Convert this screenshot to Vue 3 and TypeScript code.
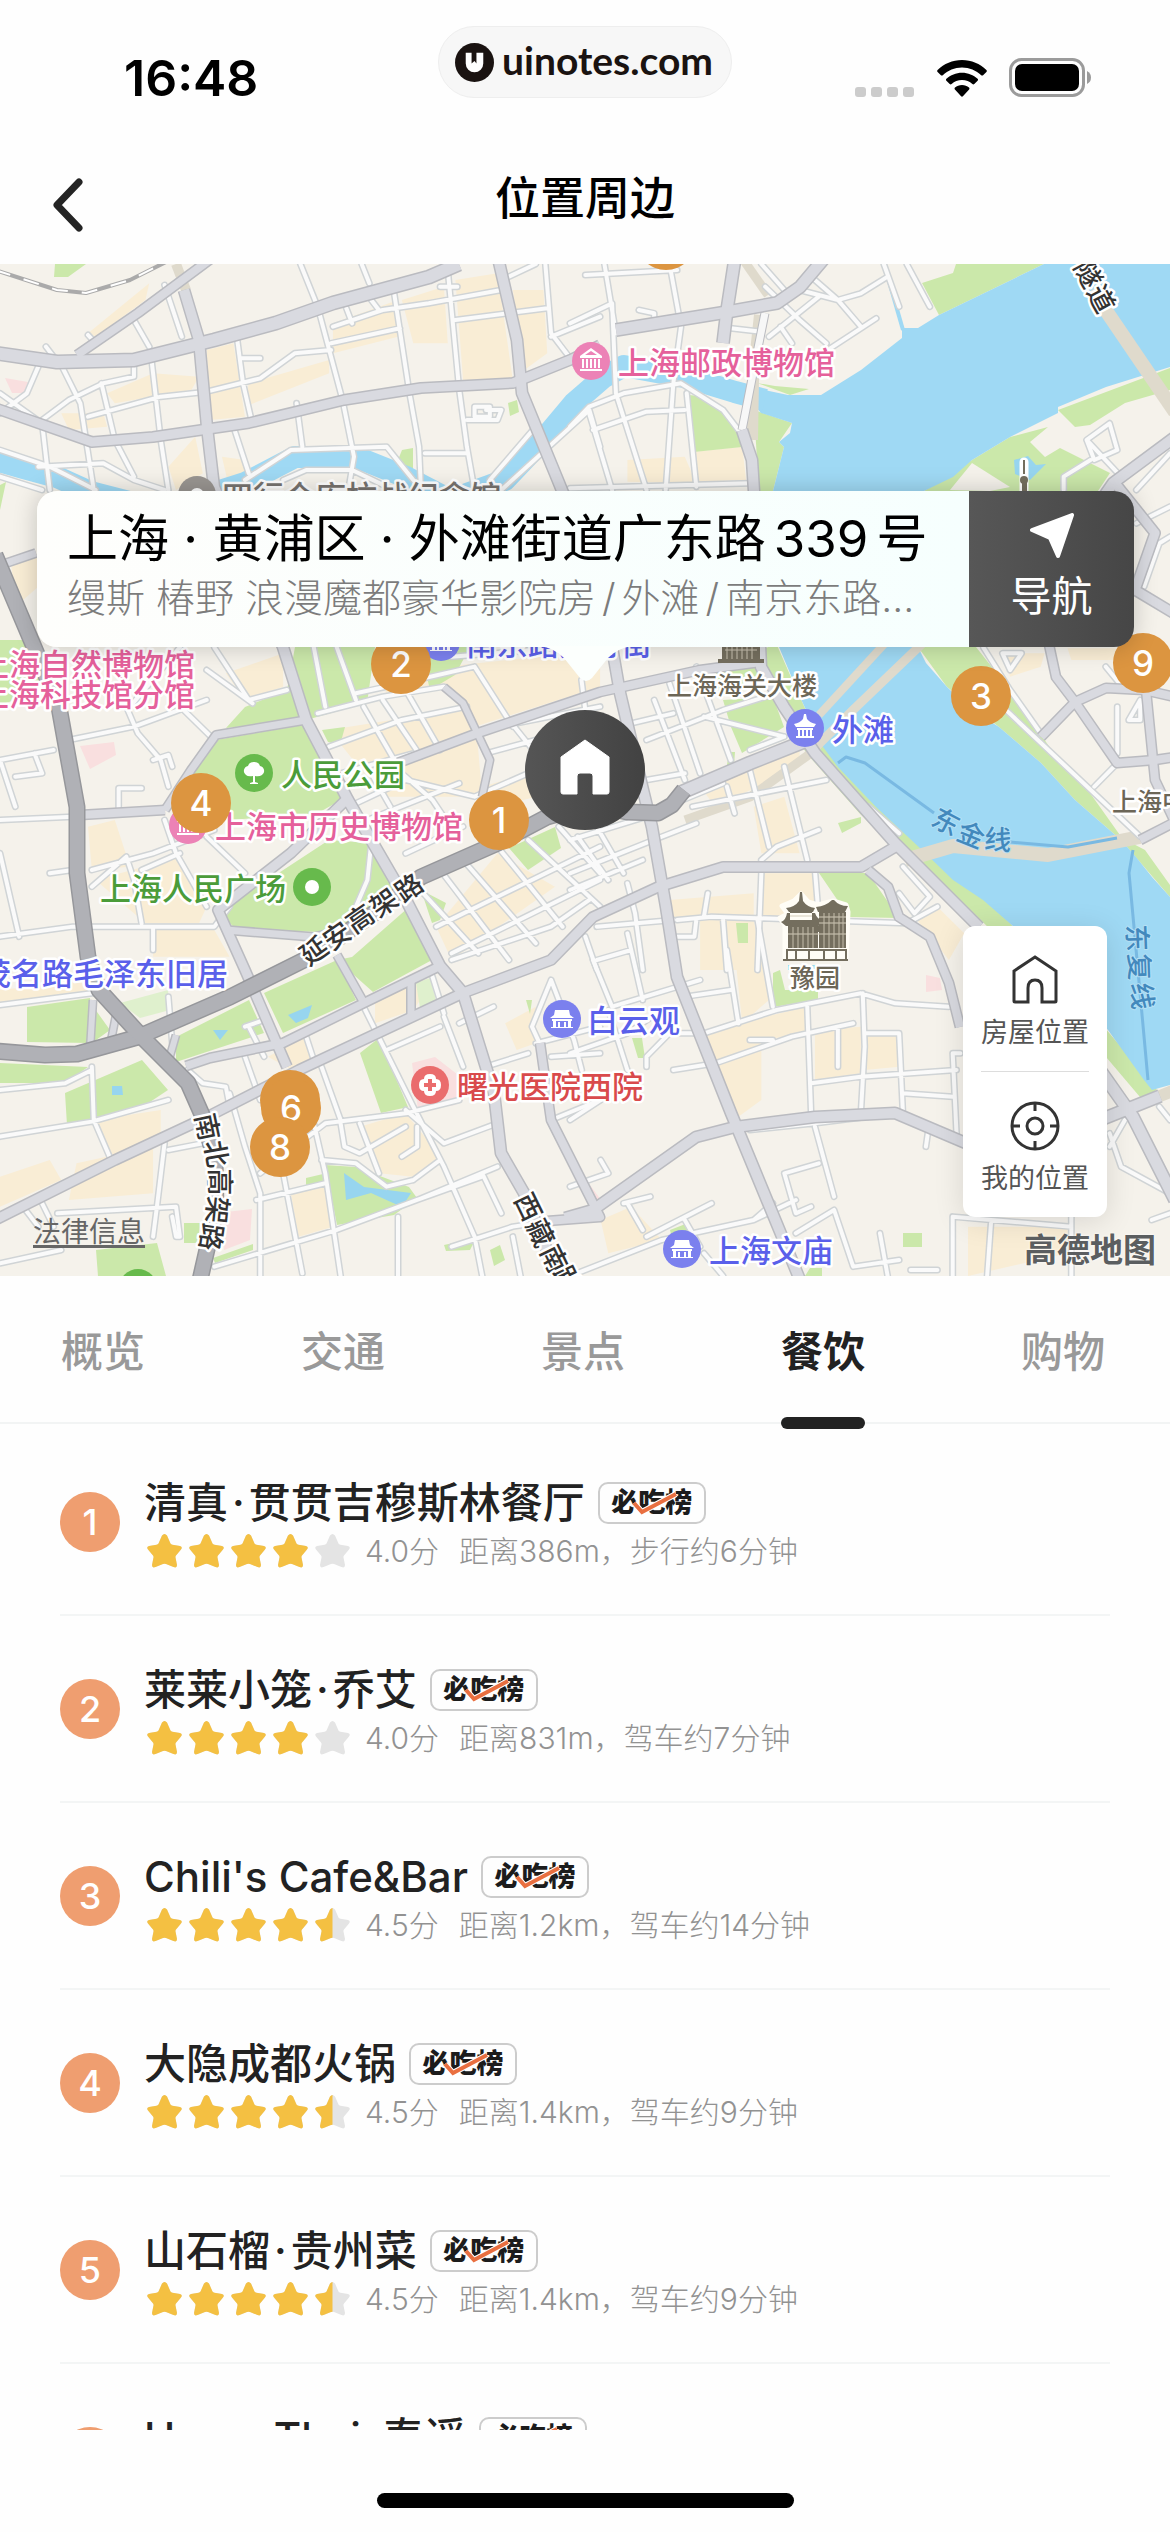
<script setup lang="ts">
import { ref } from 'vue'

interface Tile { place: string; d: string }
interface Road { w: number; d: string }
interface Poi { kind: string; x: number; y: number; tx: number; text: string; anchor?: 'start' | 'end' | 'middle'; icon: boolean }
interface Glyph { ch: string; x: number; y: number; r: number; tone: 'road' | 'ferry' }
interface Pin { n: string; x: number; y: number }
interface Place { name: string[]; score: string; stars: number; distance: string }

const north = 'translate(0 260) scale(.3827 .3333)'
const northEast = 'translate(570 260) scale(.3827 .3333)'
const middle = 'translate(0 640) scale(.3827 .3333)'
const middleEast = 'translate(570 640) scale(.3827 .3333)'
const south = 'translate(0 960) scale(.3827 .3333)'
const southEast = 'translate(570 900) scale(.3827 .3333)'

const blocks: Tile[] = [
  { place: north, d: 'M540 270L610 250 640 470 550 480Z M1050 120L1160 80 1170 250 1080 250Z M1190 60L1300 40 1340 360 1210 360Z M230 220L390 70 380 120 250 230Z M280 400L400 340 520 350 500 390 300 430Z M870 190L1040 120 1040 230 870 280Z M650 370L860 300 860 340 640 440Z M1340 90L1420 90 1430 280 1370 330Z M30 920L100 880 100 980 40 1040Z M440 620L510 530 530 640 460 690Z M580 590L640 600 660 650 600 690Z M160 460L270 460 280 500 180 510Z' },
  { place: northEast, d: 'M150 600L300 590 330 670 150 665Z M325 575L450 560 460 660 330 665Z M1420 1165L1300 1165 1310 1200 1568 1200Z' },
  { place: middle, d: 'M590 100L740 40 740 140 640 180Z M860 270L1240 200 1260 470 1000 470Z M1000 100L1568 30 1568 140 1240 260 1160 140 1010 170Z M1140 860L1300 640 1450 740 1180 960Z M230 560L300 540 340 680 240 690Z M400 870L560 870 600 950 400 950Z M250 720L470 650 540 800 520 850 380 850Z M1260 440L1380 400 1400 470 1300 500Z' },
  { place: middleEast, d: 'M480 500L560 470 600 640 500 640Z M260 780L480 760 480 990 340 990 340 840 270 830Z M500 700L640 700 640 830 500 830Z M340 440L600 310 600 380 380 500Z M900 830L960 800 1030 880 990 960Z M1130 40L1240 40 1230 80 1150 110Z' },
  { place: south, d: 'M250 480L420 450 420 540 290 590Z M700 290L800 230 830 320 780 340Z M980 100L1140 50 1080 150 980 190Z M940 500L1060 460 1160 600 1080 650 990 640Z M200 610L400 560 400 700 180 720Z M760 700L850 680 870 800 780 830Z M0 90L230 60 230 100 0 130Z M0 650L130 600 160 660 0 740Z M1320 190L1400 140 1400 250 1350 270Z' },
  { place: southEast, d: 'M330 400L620 320 620 400 500 420 500 600 440 650Z M640 390L760 380 760 520 640 540Z M770 400L860 400 860 500 770 510Z M480 60L520 300 450 370 430 150Z M1040 980L1300 980 1300 1060 1040 1128Z M80 960L160 920 240 1020 100 1060Z' },
]

const parks = 'M956 264L953 273 922 283 939 315 1044 264ZM1058 410L1170 368V390L1125 403 1090 425 1075 427ZM924 491L972 460 1010 437 1048 427 1030 442 1045 457 1060 448 1110 473 1098 491ZM754 410L792 423 779 442 784 447 773 491H757V460ZM757 383L775 386 809 389 790 395ZM689 395L708 397 738 427 742 447 694 452ZM402 450L413 448 413 475 398 460ZM508 403L517 400 519 412 510 416ZM55 264H86L68 277 54 277ZM0 485L6 482 0 510ZM295 647H375L367 703 306 720 226 728 245 707 287 690ZM420 647H470L455 675 430 690ZM0 640L30 640 45 690 0 705ZM216 740L302 725 329 767 341 800 318 813 230 820 188 773ZM322 730L345 727 340 745 328 742ZM329 840L371 843 394 887 364 930 325 932 237 930 218 912 268 880ZM352 957L409 907 432 960 373 992 337 960ZM264 993L337 960 356 1000 283 1033ZM176 1037L249 1000 264 1033 176 1062ZM27 1007L90 998V1043L27 1042ZM92 1005L110 1030 92 1043ZM0 1063L88 1067 65 1083H0ZM65 1093L142 1060 168 1090 138 1110 67 1125ZM360 1053L379 1038 408 1107 381 1113ZM325 1165L356 1167 409 1187 417 1198 394 1215 337 1225ZM306 1178L323 1174V1185H306ZM96 1250L157 1243 166 1276H98ZM184 1223H200L198 1243 184 1243ZM213 1258L253 1244 253 1250 215 1263ZM444 1245L476 1238 470 1250 446 1251ZM490 1250L500 1245 505 1260 494 1266ZM526 1000H532L530 1014ZM723 700L773 697 784 727 742 753 731 727ZM715 667H769L777 687 719 693ZM729 752H735L734 765 727 765ZM819 873H868L899 918 849 917ZM838 823L861 817V823L842 833ZM773 973L780 970 785 990H818V1000L773 1007ZM736 923H748V943H738ZM632 1038H642L645 1058 638 1058ZM903 1233H922V1247H903ZM670 1230L688 1223V1245L675 1250ZM810 1268H822V1276H805ZM509 848L555 827 561 848 528 870ZM421 890L446 903 440 920 432 923ZM918 647H976L1010 690 1062 765 1090 793 1122 838 1145 850 1170 885V897L1121 840 1075 800 1041 763 999 727 947 687Z'

const river = 'M1170 264H1044L939 315 918 328H902V338L861 370 821 395 788 395 746 386 746 396 761 413 792 423 790 433 779 442 784 447 779 467 773 491 779 647 800 697 823 747 838 767 876 807 922 850 953 880 983 900 1014 927 1108 1030 1144 1080 1152 1090 1170 1085V897L1152 877 1136 857 1121 840 1075 800 1041 763 999 727 968 707 947 687 926 663 918 647 924 491 953 477 972 460 1010 437 1058 413V407L1106 387 1170 367Z'
const creek = 'M-5 460L23 468 57 477 90 492 160 510 245 483 295 457 356 457 406 477 450 500 505 480 543 440 574 403 604 377 624 366 689 378 735 392 765 400'
const ponds = 'M344 1173L364 1187 411 1193 402 1207 371 1193 346 1200ZM288 1015L312 1005 308 1018 296 1023ZM213 1030H228L220 1040ZM112 1086H122L123 1095H112ZM1014 460L1028 456 1036 465 1046 464 1030 480 1015 474Z'

const streets: Tile[] = [
  { place: north, d: 'M785 12L830 140 895 420 925 590 910 690 M945 12L965 70 M620 240L635 370 655 470 M540 395L680 355 770 280 865 270 M865 250L1045 205 M870 200L1000 150 1120 130 1310 90 M1030 100L1070 400 1095 560 1100 690 M1170 30L1200 390 1220 560 1240 690 M1190 180L1430 145 M1425 12L1440 220 1500 310 M1440 230L1568 170 M350 180L390 260 M395 290L420 540 440 690 M160 315L210 430 245 690 M100 320L70 400 0 460 M110 480L180 420 270 370 350 350 350 310 M230 470L420 410 540 395 M265 370L300 540 350 650 M0 400L110 490 130 690 M430 75L475 230 M100 620L270 610 350 660 430 690 M0 570L130 620 250 690 M0 650L110 690 M610 500L650 640 M775 430L790 560 M640 660L760 570 1010 560 1080 660 M740 660L800 630 920 630 1010 680 M1110 580L1220 580 M1220 480L1300 480 1310 450 1270 450 M1240 440H1280V470H1240Z M1280 660L1400 500 M1310 690L1540 450 1568 560 M1330 50L1400 12 M630 295H680 M1150 80H1195 M905 145L920 190 M970 120L990 150 M120 260L140 290 M230 225L250 250' },
  { place: northEast, d: 'M0 190L110 130 120 400 200 690 M90 12L120 220 M260 12L290 200 270 370 250 690 M40 45L280 30 M0 500L50 440 140 400 290 370 400 450 440 510 M60 510L200 455 300 450 M50 460L110 690 M305 400L330 680 M0 685L470 670 M510 80L600 180 670 250 M500 12L560 90 M600 90L700 120 760 100 830 50 M640 60L700 120 760 200 M680 265L800 175 M520 230L650 110 M420 205L500 215 M820 12L860 140 M880 12L940 140 M1350 540L1410 490 1430 570 1370 600Z M1350 540L1440 650 M1480 790L1568 740 M1500 980L1540 850 1568 830 M1290 690L1290 650 1360 600 M1480 690L1568 580 M180 150L220 160 220 200 M550 200L580 250' },
  { place: middle, d: 'M180 300L350 260 540 180 M330 200L360 280 420 360 440 440 M480 210L560 300 M340 200L470 22 M560 22L650 180 750 150 M660 190L540 90 M0 360L140 330 M0 540L190 530 M90 340L110 400 40 410 M0 360L40 500 M400 360L440 345 450 380 M310 510V445H370 M190 690L130 700 M240 690L400 640 560 570 M240 740L330 650 350 720 370 850 M370 690L470 640 M0 640L50 890 M0 890L190 860 560 860 600 800 M400 860V930 M430 540L460 640 540 800 M540 590L640 700 M970 610L960 720 930 800 M830 220L1000 170 1160 140 M860 320L1050 240 1220 200 M890 400L1080 340 M930 490L1060 420 1240 470 1380 400 M960 540L1200 430 M880 22L930 180 M820 22L850 200 M930 160L1050 130 1240 80 M1000 180L1100 350 M1060 150L1150 330 M950 200L1050 400 1130 480 M1240 80L1340 260 M1180 50L1480 22 M1260 270L1568 200 M1270 340L1400 300 M1330 240L1400 340 M1140 860L1568 620 M1180 940L1568 720 M1060 640L1210 560 M1090 740L1250 940 M1150 690L1330 960 M1210 660L1400 910 M1300 620L1470 860 M1380 600L1568 800 M1460 560L1568 700 M1130 480L1200 600 M1180 960L1440 860 1540 780 M960 380L1020 500' },
  { place: middleEast, d: 'M30 120L40 210 M220 180L300 420 M260 130L340 400 M200 300L400 210 540 160 M160 250L270 220 M200 420L300 400 M330 80L420 360 M350 230L560 290 M470 330L560 290 M210 520L400 430 M410 440L430 520 M470 390L520 620 M560 380L620 660 M320 500L670 420 M500 660L540 620 650 570 M0 600L200 530 M0 700L240 590 330 550 M20 590L100 720 M70 560L140 700 M150 730L170 820 190 990 M0 750L190 660 M500 700L490 990 M640 690L650 830 M280 840L370 830 880 850 960 800 M350 830L360 760 M400 840L410 990 M70 860L270 840 M40 890L70 990 M330 840L325 890 280 890 M870 680L940 770 900 820 860 760 M780 500L860 580 M1130 200L1490 590 M1080 22L1150 150 1230 280 M1430 370L1370 440 M1430 200L1430 340 M1460 240L1490 180 1490 240Z M1150 90L1130 40 1180 40 1150 90 M1450 150L1400 80' },
  { place: south, d: 'M0 135L240 100 M240 320L245 480 290 600 M0 390L170 370 240 330 M0 530L240 485 440 420 M440 110L450 250 M640 290L680 420 M640 200L690 180 M650 200L690 290 M840 320L890 480 M680 640L850 490 1060 460 1200 420 M600 400L640 560 680 700 680 948 M440 570L530 550 M430 550L410 740 400 830 M150 760L460 740 470 830 M450 770L460 830 470 830 M110 730L140 800 M60 740L100 800 M0 910L160 870 M560 920L880 810 1090 720 1300 620 M740 640L790 940 M820 490L850 640 890 948 M670 720L850 670 M890 490L900 560 940 580 1060 500 M940 490L990 640 M840 600L930 610 1010 680 1080 660 M950 140L1080 440 1160 620 1240 830 1260 948 M1160 170L1210 320 M1200 190L1290 140 M1010 270L1150 200 M1060 450L1160 550 1300 490 M1090 500L1090 560 1050 590 M1040 770V948 M1090 720L1260 650 M1080 660L1150 600 M1260 640L1310 760 M1180 860L1340 800 1400 790 M1340 830L1360 948 M1400 250L1568 200 M1440 290L1568 280 M1270 320L1380 280 M1440 480L1568 420 M1440 60L1390 200 1410 250 M1440 60L1500 240 1520 330 M1130 50L1160 160 M490 330L530 370 590 380 600 440 M800 230L820 300' },
  { place: southEast, d: 'M60 180L110 320 340 240 M70 180L160 150 M150 100L190 300 M0 460L150 400 240 330 M100 330L150 510 M200 500L200 470 260 400 340 400 M270 510L380 490 580 410 740 370 M300 290L420 270 M410 150L440 370 M350 400L540 330 760 280 850 310 990 320 M490 60L530 320 M620 320L630 640 M765 280L770 440 760 640 M700 380V500 M770 400H860L870 640 M630 550L760 530 1010 510 M870 580L1000 590 M1020 460H1000L1010 700 M470 690L640 670 850 640 M640 680L690 890 M650 790L560 820 590 940 630 920 M480 960L590 900 M590 1000L690 930 740 1100 860 1080 M810 1000L830 1128 M140 910L210 890 M150 910L190 990 M200 1010L370 910 M0 1128L240 1020 480 960 530 910 M300 960L340 1040 M1000 950L1310 980 M1000 950V1128 M1100 970L1090 1128 M1310 950V1128 M890 1110L960 1110 M1410 700L1440 800 1568 880 M1410 740L1450 660 M935 700L930 740 M350 1060L400 1128 M0 660L80 600 M80 780L100 820 0 860 M470 420H530 M1540 620L1568 660 M1520 960L1568 940' },
]

const roads: Road[] = [
  { w: 13, d: 'M-5 353L57 362 134 360 214 340 276 323 333 303 429 277 459 264' },
  { w: 9, d: 'M77 355L138 313 212 258' },
  { w: 11, d: 'M184 290L199 340 207 427 214 487 283 647 306 720 348 800 406 900 440 966 463 993 494 1093 501 1153 524 1193 559 1280' },
  { w: 10, d: 'M-5 408L92 442 153 437 249 423 344 400 421 388 513 383 570 360 600 345' },
  { w: 11, d: 'M498 258L517 340 522 393 559 483 590 560 612 647 620 693 643 790 652 827 666 907 677 977 731 1113 800 1280' },
  { w: 12, d: 'M616 330L727 312 777 303 800 287 827 255' },
  { w: 12, d: 'M735 258L727 310 723 343' },
  { w: 11, d: 'M742 430L752 460 754 491 758 600 761 667 784 707 815 753 895 843 979 927' },
  { w: 11, d: 'M1175 437L1113 483 1060 560' },
  { w: 10, d: 'M1115 483L1155 533 1135 590 1175 614' },
  { w: 9, d: 'M1048 640L1056 677 1075 702 1041 737' },
  { w: 9, d: 'M1075 702L1106 688 1144 690 1175 697' },
  { w: 9, d: 'M1075 702L1117 763 1155 760 1175 757' },
  { w: 9, d: 'M1146 690L1155 780 1175 822 1140 840' },
  { w: 9, d: 'M398 763L478 733 600 692 700 670 761 662' },
  { w: 8, d: 'M165 810L191 770 216 735 306 720' },
  { w: 9, d: 'M80 815L165 810' },
  { w: 10, d: 'M348 798L291 853 218 910 245 970 287 1067' },
  { w: 8, d: 'M226 930L314 937 364 925' },
  { w: 8, d: 'M337 955L364 1003' },
  { w: 9, d: 'M186 1066L210 1058 283 1043 364 1003 440 966' },
  { w: 10, d: 'M-5 1220L115 1160 207 1117 299 1070 463 993 551 960 593 917 658 887 723 867 861 867 895 847' },
  { w: 11, d: 'M565 1218L593 1210 696 1137 735 1127 815 1117 895 1113 975 1147' },
  { w: 8, d: 'M411 980V1015' },
  { w: 9, d: 'M540 1043L551 1120 600 1217 547 1221' },
  { w: 9, d: 'M868 870L888 887 899 917 930 937 949 983 960 1027' },
  { w: 12, d: 'M1100 1070L1133 1117 1175 1200' },
  { w: 12, d: 'M1100 1120L1160 1096' },
  { w: 7, d: 'M444 687L463 703 490 760 482 797' },
  { w: 8, d: 'M-5 567L36 553' },
  { w: 7, d: 'M90 1050L93 1000M110 1046L117 1010M168 1063L176 1035' },
  { w: 13, d: 'M680 793L750 763 808 740' },
]

const expressways: Road[] = [
  { w: 14, d: 'M-5 1051L45 1055 77 1054 138 1037 230 997 314 955 383 907 421 877 498 843 547 817 590 805 627 812 658 813 672 805 684 790' },
  { w: 14, d: 'M-5 555L34 647 59 707 77 807 77 873 88 957 99 990 142 1037 188 1083 203 1117 215 1160 216 1210 200 1280' },
]

const pois: Poi[] = [
  { kind: 'museum', x: 591, y: 361, tx: 618, text: '上海邮政博物馆', icon: true },
  { kind: 'museum', x: 0, y: 663, tx: 195, text: '上海自然博物馆', anchor: 'end', icon: false },
  { kind: 'museum', x: 0, y: 693, tx: 195, text: '上海科技馆分馆', anchor: 'end', icon: false },
  { kind: 'museum', x: 188, y: 825, tx: 215, text: '上海市历史博物馆', icon: true },
  { kind: 'park', x: 254, y: 773, tx: 281, text: '人民公园', icon: true },
  { kind: 'square', x: 312, y: 887, tx: 286, text: '上海人民广场', anchor: 'end', icon: true },
  { kind: 'sight', x: 0, y: 972, tx: 228, text: '茂名路毛泽东旧居', anchor: 'end', icon: false },
  { kind: 'sight', x: 441, y: 642, tx: 466, text: '南京路步行街', icon: true },
  { kind: 'pagoda', x: 805, y: 728, tx: 832, text: '外滩', icon: true },
  { kind: 'sight', x: 562, y: 1019, tx: 587, text: '白云观', icon: true },
  { kind: 'sight', x: 682, y: 1249, tx: 709, text: '上海文庙', icon: true },
  { kind: 'hospital', x: 430, y: 1085, tx: 457, text: '曙光医院西院', icon: true },
  { kind: 'plain', x: 197, y: 495, tx: 222, text: '四行仓库抗战纪念馆', icon: true },
  { kind: 'landmark', x: 0, y: 685, tx: 742, text: '上海海关大楼', anchor: 'middle', icon: false },
  { kind: 'landmark', x: 0, y: 977, tx: 815, text: '豫园', anchor: 'middle', icon: false },
  { kind: 'landmark', x: 0, y: 801, tx: 1112, text: '上海中心大厦', icon: false },
  { kind: 'square', x: 138, y: 1288, tx: 168, text: '', icon: true },
]

const glyphs: Glyph[] = [
  { ch: '延', x: 314, y: 951, r: -35, tone: 'road' }, { ch: '安', x: 337, y: 936, r: -35, tone: 'road' },
  { ch: '高', x: 360, y: 919, r: -35, tone: 'road' }, { ch: '架', x: 384, y: 903, r: -35, tone: 'road' },
  { ch: '路', x: 409, y: 888, r: -35, tone: 'road' },
  { ch: '南', x: 207, y: 1127, r: 78, tone: 'road' }, { ch: '北', x: 216, y: 1154, r: 80, tone: 'road' },
  { ch: '高', x: 219, y: 1182, r: 90, tone: 'road' }, { ch: '架', x: 217, y: 1210, r: 96, tone: 'road' },
  { ch: '路', x: 211, y: 1237, r: 98, tone: 'road' },
  { ch: '西', x: 528, y: 1207, r: 64, tone: 'road' }, { ch: '藏', x: 540, y: 1233, r: 64, tone: 'road' },
  { ch: '南', x: 554, y: 1259, r: 64, tone: 'road' }, { ch: '路', x: 567, y: 1280, r: 64, tone: 'road' },
  { ch: '隧', x: 1088, y: 274, r: 62, tone: 'road' }, { ch: '道', x: 1101, y: 299, r: 62, tone: 'road' },
  { ch: '东', x: 946, y: 822, r: 28, tone: 'ferry' }, { ch: '金', x: 971, y: 835, r: 22, tone: 'ferry' },
  { ch: '线', x: 998, y: 840, r: 4, tone: 'ferry' },
  { ch: '东', x: 1137, y: 938, r: 88, tone: 'ferry' }, { ch: '复', x: 1139, y: 967, r: 88, tone: 'ferry' },
  { ch: '线', x: 1142, y: 996, r: 86, tone: 'ferry' },
]

const pins: Pin[] = [
  { n: '', x: 666, y: 240 }, { n: '2', x: 401, y: 664 }, { n: '9', x: 1143, y: 663 },
  { n: '3', x: 981, y: 696 }, { n: '4', x: 201, y: 803 }, { n: '1', x: 499, y: 820 },
  { n: '', x: 290, y: 1100 }, { n: '6', x: 291, y: 1108 }, { n: '8', x: 280, y: 1147 },
]

const tabs = ['概览', '交通', '景点', '餐饮', '购物']
const active = ref('餐饮')

const places: Place[] = [
  { name: ['清真', '贯贯吉穆斯林餐厅'], score: '4.0', stars: 4, distance: '距离386m，步行约6分钟' },
  { name: ['莱莱小笼', '乔艾'], score: '4.0', stars: 4, distance: '距离831m，驾车约7分钟' },
  { name: ["Chili's Cafe&Bar"], score: '4.5', stars: 4.5, distance: '距离1.2km，驾车约14分钟' },
  { name: ['大隐成都火锅'], score: '4.5', stars: 4.5, distance: '距离1.4km，驾车约9分钟' },
  { name: ['山石榴', '贵州菜'], score: '4.5', stars: 4.5, distance: '距离1.4km，驾车约9分钟' },
  { name: ['Home Thai', '泰谣'], score: '4.5', stars: 4.5, distance: '距离1.5km，驾车约9分钟' },
]

const starPath = 'M15 1.500Q17.500 -1.500 20 1.500L23.500 9.500Q24 10.500 25.500 10.800L33 12Q36 13 34 15.500L29 21.500Q28.300 22.300 28.500 23.500L30 31Q30 34.500 26.500 33L19 30Q17.500 29.300 16 30L8.500 33Q5 34.500 5 31L6.500 23.500Q6.700 22.300 6 21.500L1 15.500Q-1 13 2 12L9.500 10.800Q11 10.500 11.500 9.500Z'
const fillOf = (stars: number, i: number) => Math.max(0, Math.min(1, stars - i + 1)) * 35
</script>

<template>
  <main class="screen">
    <div class="status">
      <span class="time">16:48</span>
      <div class="brand">
        <svg class="brand-mark" viewBox="0 0 40 40" aria-hidden="true">
          <circle cx="20" cy="20" r="20" fill="#1a1311" />
          <path d="M11 10v11a9 9 0 0 0 18 0V10h-7v11l-2-2.500-3 2.500V10z" fill="#fff" />
        </svg>
        <span>uinotes.com</span>
      </div>
      <div class="signals">
        <svg class="dots" viewBox="0 0 60 10" aria-hidden="true"><g fill="#ccc"><rect width="11" height="10" rx="3" /><rect x="16" width="11" height="10" rx="3" /><rect x="32" width="11" height="10" rx="3" /><rect x="48" width="11" height="10" rx="3" /></g></svg>
        <svg class="wifi" viewBox="0 0 50 37" aria-hidden="true">
          <path d="M25 0C15.500 0 7 3.800.6 9.900c-.6.600-.6 1.400 0 2l3.300 3.300c.5.500 1.300.5 1.900 0C10.900 10.500 17.600 7.600 25 7.600s14.100 2.900 19.200 7.600c.6.500 1.400.5 1.900 0l3.300-3.300c.6-.6.6-1.400 0-2C43 3.800 34.500 0 25 0zM25 12.700c-6 0-11.500 2.300-15.600 6.100-.6.500-.6 1.400 0 2l3.300 3.200c.5.500 1.300.5 1.900.1 2.700-2.500 6.400-4 10.400-4s7.700 1.500 10.400 4c.6.400 1.400.4 1.900-.1l3.300-3.200c.6-.6.6-1.500 0-2C36.500 15 31 12.700 25 12.700zM25 25c-2.700 0-5.200 1-7 2.600-.6.500-.6 1.400-.1 1.900l6.200 6.800c.5.600 1.300.6 1.800 0l6.200-6.800c.5-.5.5-1.400-.1-1.900C30.200 26 27.700 25 25 25z" />
        </svg>
        <svg class="battery" viewBox="0 0 83 39" aria-hidden="true">
          <rect x="1.500" y="1.500" width="73" height="36" rx="11" fill="none" stroke="#9b9b9b" stroke-width="3" />
          <rect x="6" y="6" width="64" height="27" rx="7" />
          <path d="M78 13q4 2 4 6.500t-4 6.500z" fill="#9b9b9b" />
        </svg>
      </div>
    </div>

    <header class="bar">
      <button class="back" type="button" aria-label="返回">
        <svg viewBox="0 0 32 54" aria-hidden="true"><path d="M27 4 5 27l22 23" fill="none" stroke="#242424" stroke-width="7" stroke-linecap="round" stroke-linejoin="round" /></svg>
      </button>
      <h1>位置周边</h1>
    </header>

    <section class="map" aria-label="地图">
      <svg class="canvas" viewBox="0 264 1170 1012" preserveAspectRatio="xMidYMid slice">
        <defs>
          <linearGradient id="dark" x1="0" x2="1"><stop offset="0" stop-color="#555" /><stop offset="1" stop-color="#424242" /></linearGradient>
          <symbol id="i-museum" viewBox="0 0 38 38"><circle cx="19" cy="19" r="19" fill="#ec82b6" /><path d="M8 14 19 6l11 8v2H8zM10 17h2v9h-2zM14 17h2v9h-2zM18 17h2v9h-2zM22 17h2v9h-2zM26 17h2v9h-2zM8 27h22v2H8z" fill="#fff" /><path d="M13 13l6-4 6 4z" fill="#ec82b6" /></symbol>
          <symbol id="i-sight" viewBox="0 0 38 38"><circle cx="19" cy="19" r="19" fill="#7b80ee" /><path d="M12 10h14l1 5 4 3H7l4-3zM9 19h20v2H9zM10 21h3v6h-3zM15 22h2v5h-2zM21 22h2v5h-2zM25 21h3v6h-3zM8 27h22v1H8z" fill="#fff" /></symbol>
          <symbol id="i-pagoda" viewBox="0 0 38 38"><circle cx="19" cy="19" r="19" fill="#7b80ee" /><path d="M18 5h2l1 5q3 4 9 5l-2 3H10l-2-3q6-1 9-5zM11 19h16v2H11zM12 21h2v6h-2zM16 21h2v6h-2zM20 21h2v6h-2zM24 21h2v6h-2zM10 27h18v2H10z" fill="#fff" /></symbol>
          <symbol id="i-park" viewBox="0 0 38 38"><circle cx="19" cy="19" r="19" fill="#67ba4c" /><path d="M19 8a6 6 0 0 1 6 4 5 5 0 0 1 2 9q-3 2-7 1v6l3 1v1h-8v-1l3-1v-6q-5 1-7-1a5 5 0 0 1 2-9 6 6 0 0 1 6-4z" fill="#fff" /></symbol>
          <symbol id="i-square" viewBox="0 0 38 38"><circle cx="19" cy="19" r="19" fill="#67ba4c" /><circle cx="19" cy="19" r="7" fill="#fff" /></symbol>
          <symbol id="i-hospital" viewBox="0 0 38 38"><circle cx="19" cy="19" r="19" fill="#ea6c6d" /><path d="M13 13q0-5 6-5t6 5q5 0 5 6t-5 6q0 5-6 5t-6-5q-5 0-5-6t5-6z" fill="#fff" /><path d="M17 13h4v4h4v4h-4v4h-4v-4h-4v-4h4z" fill="#ea6c6d" /></symbol>
          <symbol id="i-plain" viewBox="0 0 38 38"><circle cx="19" cy="19" r="19" fill="#999591" /><circle cx="19" cy="19" r="7" fill="#fff" /></symbol>
        </defs>

        <rect x="-600" y="0" width="2400" height="1600" fill="#f5f2eb" />
        <g fill="#f9edd5"><path v-for="(b, i) in blocks" :key="i" :transform="b.place" :d="b.d" /></g>
        <path fill="#f9dfdf" d="M5 378L28 382 24 393 12 393ZM80 746L114 742 116 755 90 769ZM412 1063L435 1057 462 1078 455 1105 418 1110ZM226 1212L252 1209 250 1240 224 1250ZM926 975L940 978 942 990 926 992ZM590 1185L601 1200 596 1206Z" />
        <path fill="#dff0cd" d="M120 1003L168 990 170 1010 140 1018ZM416 983L430 978 436 1000 420 1008Z" />
        <path :d="parks" fill="#cbe8aa" />
        <path d="M768 647L790 697 813 747 866 807 912 852 973 900 1004 930 1100 1036 1150 1095" class="bank" />
        <path :d="river" fill="#9fd9f4" />
        <path :d="creek" class="creek" />
        <path :d="ponds" fill="#97d5ef" />
        <path d="M884 264L903 330" class="inlet" />
        <path d="M972 463L1010 487 990 491 950 490Z" fill="#f5f2eb" />
        <g class="tunnel">
          <path d="M888 640L819 715" stroke-width="8" /><path d="M926 640L853 710 807 756 750 797 685 820" stroke-width="9" />
          <path d="M905 860L953 846 1048 855 1140 837" stroke-width="14" />
          <path d="M1092 290L1175 412" stroke-width="14" /><path d="M740 255L768 295" stroke-width="9" />
          <path d="M760 315L753 380 752 440" stroke-width="12" /><path d="M176 264L186 290" stroke-width="10" />
          <path d="M1150 1100L1175 1090" stroke-width="12" />
        </g>
        <path class="ferry-line" d="M838 763L846 757 865 763 934 813M1010 842L1068 847 1117 838M1133 850L1129 873 1134 927 1148 1080" />
        <path class="rail" d="M-5 270L57 290 86 293 130 280 170 260" /><path class="rail-dash" d="M-5 270L57 290 86 293 130 280 170 260" />

        <g class="street-edge"><path v-for="(s, i) in streets" :key="i" :transform="s.place" :d="s.d" /></g>
        <g class="street"><path v-for="(s, i) in streets" :key="i" :transform="s.place" :d="s.d" /></g>
        <path class="road-edge" d="M765 313L757 353 742 430" stroke-width="9" /><path d="M765 313L757 353 742 430" class="street-wide" />
        <g class="road-edge"><path v-for="(r, i) in roads" :key="i" :d="r.d" :stroke-width="r.w + 2" /></g>
        <g class="road"><path v-for="(r, i) in roads" :key="i" :d="r.d" :stroke-width="r.w - 1" /></g>
        <g class="express-edge"><path v-for="(r, i) in expressways" :key="i" :d="r.d" :stroke-width="r.w + 3" /></g>
        <g class="express"><path v-for="(r, i) in expressways" :key="i" :d="r.d" :stroke-width="r.w" /></g>

        <g>
          <path d="M785 958V925L780 918 788 914 782 906 794 901 801 894 808 902 818 905 833 901 846 905 848 912 846 958z" fill="#fffdf6" stroke="#fffdf6" stroke-width="5" stroke-linejoin="round" />
          <g fill="#746e5e">
            <path d="M800 892h2l1 9q4 6 12 7l-2 4h-24l-3-4q9-1 13-7z" />
            <path d="M790 912h22v8h-22zM787 913q-1 7-6 9l5 4h32l5-5q-6-2-8-8z" />
            <path d="M788 926h30v22h-30z" />
            <path d="M832 900h2q5 6 14 6l-3 6h-27l-2-5q10-1 16-7z" />
            <path d="M819 912h27v36h-27zM814 928q4-1 6-5h10q2 4 5 5l-3 4h-16z" />
          </g>
          <path d="M788 934h58M819 917h27M819 923h27M790 916h22" stroke="#d4cdbb" stroke-width="1" fill="none" />
          <path d="M793 927v21M798 927v21M803 927v21M808 927v21M813 927v21M824 913v35M829 913v35M834 913v35M839 913v35M843 913v35" stroke="#c4bdab" stroke-width="1" fill="none" />
          <path d="M786 950h61M787 950v9M796 950v9M809 950v9M824 950v9M836 950v9M846 950v9M783 960h65" fill="none" stroke="#746e5e" stroke-width="2" />
          <path d="M722 640h38v19h4v4h-46v-4h4z" fill="#746e5e" />
          <path d="M725 650h32M727 645v14M732 645v14M737 645v14M742 645v14M747 645v14M752 645v14" stroke="#c9c2b1" stroke-width="1" fill="none" />
          <path d="M1024 462v30" stroke="#fff" stroke-width="9" stroke-linecap="round" /><path d="M1024 460v14" stroke="#746e5e" stroke-width="2" /><circle cx="1024" cy="480" r="4" fill="#746e5e" /><path d="M1022 482h5v16h-5z" fill="#746e5e" />
          <path d="M788 965h6v5h-6zM798 965h5v4h-5zM812 965h10v4h-10z" fill="#99dcec" />
        </g>

        <g v-for="(p, i) in pois" :key="i">
          <use v-if="p.icon" :href="'#i-' + p.kind" :x="p.x - 19" :y="p.y - 19" width="38" height="38" />
          <text v-if="p.text" :class="['poi', p.kind]" :x="p.tx" :y="p.y + 1" :text-anchor="p.anchor ?? 'start'">{{ p.text }}</text>
        </g>
        <text v-for="(g, i) in glyphs" :key="'g' + i" :class="['way', g.tone]" :transform="`translate(${g.x} ${g.y}) rotate(${g.r})`">{{ g.ch }}</text>

        <g v-for="(p, i) in pins" :key="'p' + i" class="pin">
          <circle :cx="p.x" :cy="p.y" r="30" />
          <text v-if="p.n" :x="p.x" :y="p.y + 13">{{ p.n }}</text>
        </g>
        <circle cx="585" cy="770" r="60" fill="url(#dark)" />
        <path d="M585 740 609 757v35q0 2-2 2h-14v-18q0-3-3-3h-10q-3 0-3 3v18h-14q-2 0-2-2v-35z" fill="#fff" stroke="#fff" stroke-width="1" />
      </svg>

      <div class="callout">
        <div class="address">
          <strong>上海 · 黄浦区 · 外滩街道广东路<span class="num">339</span>号</strong>
          <p>缦斯 椿野 浪漫魔都豪华影院房<span class="slash">/</span>外滩<span class="slash">/</span>南京东路步行街</p>
        </div>
        <button class="navigate" type="button">
          <svg viewBox="0 0 46 46" aria-hidden="true"><path d="M43 2 3 17l18 8 8 18z" fill="#fff" stroke="#fff" stroke-width="4" stroke-linejoin="round" /></svg>
          导航
        </button>
        <svg class="tip" viewBox="0 0 92 36" aria-hidden="true"><path d="M0 0q14 2 24 12l16 20q6 6 12 0l16-20Q78 2 92 0z" fill="#fcfffd" /></svg>
      </div>

      <div class="tools">
        <button type="button">
          <svg viewBox="0 0 50 50" aria-hidden="true"><path d="M25 2 46 16v30q0 1-1 1H32V33q0-8-7-8t-7 8v14H5q-1 0-1-1V16z" /></svg>
          房屋位置
        </button>
        <hr>
        <button type="button">
          <svg viewBox="0 0 50 50" aria-hidden="true"><circle cx="25" cy="25" r="23" /><circle cx="25" cy="25" r="8" /><path d="M25 2v8M25 40v8M2 25h8M40 25h8" /></svg>
          我的位置
        </button>
      </div>

      <a class="legal" href="#legal">法律信息</a>
      <span class="provider">高德地图</span>
    </section>

    <nav class="tabs">
      <button v-for="t in tabs" :key="t" type="button" :class="{ on: t === active }" @click="active = t">{{ t }}</button>
    </nav>

    <ol class="list">
      <li v-for="(p, i) in places" :key="i">
        <span class="rank">{{ i + 1 }}</span>
        <div class="info">
          <div class="title">
            <h2><template v-for="(part, k) in p.name" :key="k"><span v-if="k" class="dot">·</span>{{ part }}</template></h2>
            <span class="badge">必吃榜
              <svg viewBox="0 0 46 24" aria-hidden="true"><path d="M2 12l8 9L44 3" fill="none" stroke="#fff" stroke-width="6" /><path d="M2 12l8 9L44 3" fill="none" stroke="#e96f40" stroke-width="4" /></svg>
            </span>
          </div>
          <div class="meta">
            <svg class="stars" viewBox="0 0 203 34" role="img" :aria-label="p.score">
              <g v-for="n in 5" :key="n" :transform="`translate(${(n - 1) * 42} 0)`">
                <clipPath :id="`star-${i}-${n}`"><rect :width="fillOf(p.stars, n)" height="34" /></clipPath>
                <path :d="starPath" fill="#e4e4e4" />
                <path :d="starPath" fill="#f4c042" :clip-path="`url(#star-${i}-${n})`" />
              </g>
            </svg>
            <span class="score">{{ p.score }}分</span>
            <span>{{ p.distance }}</span>
          </div>
        </div>
      </li>
    </ol>

    <footer class="home"><span /></footer>
  </main>
</template>

<style>
body { margin: 0; background: #fefefe; }
</style>

<style scoped>
* { box-sizing: border-box; }
.screen { display: flex; flex-direction: column; height: 100vh; overflow: hidden; background: #fefefe; color: #222; font-family: Inter, "Noto Sans CJK SC", sans-serif; }
button { padding: 0; border: 0; background: none; font: inherit; color: inherit; cursor: pointer; }

.status { display: grid; grid-template-columns: 1fr auto 1fr; height: 156px; padding: 26px 78px 0; }
.time { padding: 22px 0 0 46px; font-size: 50px; line-height: 60px; font-weight: 600; color: #000; }
.brand { display: flex; align-items: center; gap: 8px; height: 72px; padding: 0 18px 0 16px; border: 1px solid #eee; border-radius: 36px; background: #f7f7f7; color: #1a1311; font: 700 39px/44px Lato, sans-serif; }
.brand span { padding-bottom: 4px; }
.brand-mark { width: 39px; height: 39px; }
.signals { display: flex; justify-content: flex-end; align-items: flex-end; gap: 22px; height: 71px; }
.dots { width: 60px; height: 10px; }
.wifi { width: 50px; height: 37px; }
.battery { width: 83px; height: 39px; }

.bar { display: grid; grid-template-columns: 1fr auto 1fr; align-items: center; height: 108px; padding: 0 52px 22px; }
.back { display: flex; width: 32px; padding-top: 12px; }
.back svg { width: 32px; height: 54px; }
h1 { margin: 0; font-size: 45px; line-height: 60px; font-weight: 500; color: #000; }

.map { position: relative; flex: none; aspect-ratio: 1170 / 1012; overflow: hidden; }
.canvas { display: block; width: 100%; height: 100%; }
.canvas path { stroke-linejoin: round; }
.bank { fill: none; stroke: #cbe8aa; stroke-width: 18px; }
.creek { fill: none; stroke: #9fd9f4; stroke-width: 22px; }
.inlet { fill: none; stroke: #9fd9f4; stroke-width: 4px; }
.tunnel path { fill: none; stroke: #dfdacc; }
.ferry-line { fill: none; stroke: #79b9e2; stroke-width: 3px; }
.rail { fill: none; stroke: #aaa; stroke-width: 4px; }
.rail-dash { fill: none; stroke: #fff; stroke-width: 2px; stroke-dasharray: 16px 14px; }
.street path, .street-edge path { fill: none; vector-effect: non-scaling-stroke; stroke-linecap: round; }
.street-edge { stroke: #d0d4d6; stroke-width: 7px; }
.street { stroke: #fafafa; stroke-width: 4px; }
.street-wide { fill: none; stroke: #f7f7f7; stroke-width: 7px; }
.road-edge { fill: none; stroke: #babbc0; }
.road { fill: none; stroke: #d9dae0; }
.express-edge { fill: none; stroke: #96979b; }
.express { fill: none; stroke: #b0b1b6; }
.poi { font-size: 31px; font-weight: 500; dominant-baseline: central; paint-order: stroke; stroke: #fff; stroke-width: 5px; stroke-linejoin: round; }
.museum { fill: #e5609b; }
.park, .square { fill: #4b9c3a; }
.sight, .pagoda { fill: #5a60ea; }
.hospital { fill: #d94a4c; }
.plain { fill: #77736f; }
.landmark { font-size: 25px; fill: #6c6657; }
.way { font-size: 27px; font-weight: 500; text-anchor: middle; dominant-baseline: central; paint-order: stroke; stroke: #fff; stroke-width: 5px; stroke-linejoin: round; fill: #333; }
.ferry { fill: #4389bd; stroke: #b5e0f5; stroke-width: 2px; }
.pin circle { fill: #dc9540; }
.pin text { fill: #fff; font-size: 35px; font-weight: 500; text-anchor: middle; }

.callout { position: absolute; top: 227px; left: 37px; right: 36px; display: flex; height: 156px; border-radius: 20px; box-shadow: 0 0 24px rgba(0, 0, 0, .2); }
.address { flex: 1; min-width: 0; padding: 16px 44px 0 30px; border-radius: 20px 0 0 20px; background: linear-gradient(90deg, #fefefc, #f6fffe); }
.address strong { display: block; overflow: hidden; white-space: nowrap; font-size: 51px; line-height: 64px; font-weight: 400; color: #000; }
.num { margin: 0 8px; }
.address p { margin: 0; overflow: hidden; white-space: nowrap; text-overflow: ellipsis; font-size: 39px; line-height: 54px; font-weight: 300; color: #7c7c7c; }
.slash { margin: 0 6px; }
.navigate { display: flex; flex-direction: column; align-items: center; gap: 9px; width: 165px; padding-top: 22px; border-radius: 0 20px 20px 0; background: linear-gradient(90deg, #575757, #464646); color: #fff; font-size: 41px; line-height: 56px; }
.navigate svg { width: 46px; height: 46px; }
.tip { position: absolute; top: 155px; left: 50%; width: 92px; height: 36px; margin-left: -46px; }
.tools { position: absolute; right: 63px; bottom: 59px; width: 144px; padding: 0 18px; border-radius: 12px; background: #fff; box-shadow: 0 4px 30px rgba(0, 0, 0, .12); }
.tools button { display: flex; flex-direction: column; align-items: center; gap: 8px; width: 100%; height: 145px; padding-top: 29px; font-size: 27px; line-height: 40px; color: #555; white-space: nowrap; }
.tools svg { width: 50px; height: 50px; fill: none; stroke: #333; stroke-width: 3px; }
.tools hr { height: 1px; margin: 0; border: 0; background: #ddd; }
.legal { position: absolute; left: 33px; bottom: 24px; color: #666; font-size: 28px; line-height: 40px; text-decoration-thickness: 3px; text-underline-offset: 3px; }
.provider { position: absolute; right: 14px; bottom: 4px; color: #5b5e60; font-size: 33px; line-height: 44px; font-weight: 700; text-shadow: 0 0 3px #fff; }

.tabs { display: flex; flex: none; justify-content: space-between; height: 148px; padding: 0 65px 0 61px; border-bottom: 2px solid #f2f4f4; }
.tabs button { position: relative; height: 152px; font-size: 42px; line-height: 152px; font-weight: 500; color: #999; }
.tabs .on { color: #222; font-weight: 700; }
.tabs .on::after { content: ""; position: absolute; left: 0; right: 0; bottom: -1px; height: 12px; border-radius: 6px; background: #222; }

.list { flex: 1; min-height: 0; margin: 0; padding: 5px 60px 0; overflow: hidden; list-style: none; }
.list li { display: flex; align-items: center; gap: 24px; height: 187px; border-bottom: 2px solid #f3f5f5; }
.rank { flex: none; width: 60px; height: 60px; border-radius: 50%; background: #ef9e70; color: #fff; font-size: 36px; line-height: 60px; font-weight: 500; text-align: center; }
.info { padding-top: 6px; }
.title { display: flex; align-items: center; gap: 13px; height: 52px; }
h2 { margin: 0; font-size: 42px; line-height: 52px; font-weight: 500; white-space: nowrap; }
.dot { padding: 0 4px; }
.badge { position: relative; width: 108px; height: 42px; border: 2px solid #ccc; border-radius: 10px; color: #1c1c1c; font-size: 27px; line-height: 38px; font-weight: 900; text-align: center; white-space: nowrap; }
.badge svg { position: absolute; left: 32px; top: 7px; width: 46px; height: 24px; }
.meta { display: flex; align-items: center; height: 44px; color: #929292; font-size: 30px; line-height: 44px; font-weight: 300; white-space: nowrap; }
.stars { width: 203px; height: 34px; margin: 0 15px 0 3px; }
.score { margin-right: 20px; }

.home { display: flex; flex: none; justify-content: center; align-items: flex-end; height: 102px; padding-bottom: 24px; }
.home span { width: 417px; height: 15px; border-radius: 8px; background: #000; }
</style>
